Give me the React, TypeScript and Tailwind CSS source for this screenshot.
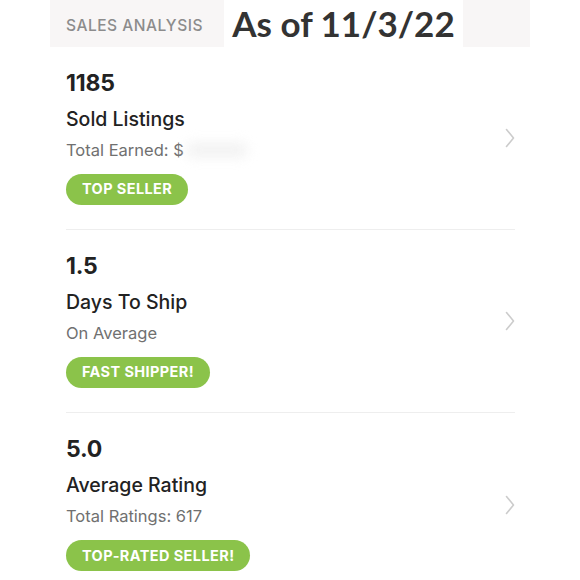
type Stat = {
  value: string;
  title: string;
  sub: string;
  badge: string;
  hidden?: boolean;
};

const STATS: Stat[] = [
  { value: "1185", title: "Sold Listings", sub: "Total Earned: $", badge: "TOP SELLER", hidden: true },
  { value: "1.5", title: "Days To Ship", sub: "On Average", badge: "FAST SHIPPER!" },
  { value: "5.0", title: "Average Rating", sub: "Total Ratings: 617", badge: "TOP-RATED SELLER!" },
];

function Chevron() {
  return (
    <svg width="10" height="20" viewBox="0 0 10 20" fill="none" className="shrink-0">
      <path d="M1.5 1.5 L8.5 10 L1.5 18.5" stroke="#cccccc" strokeWidth="1.6" strokeLinecap="round" strokeLinejoin="round" />
    </svg>
  );
}

function StatRow({ stat, last }: { stat: Stat; last: boolean }) {
  return (
    <div
      className={`flex items-center h-[183px] ${last ? "" : "border-b border-[#eeeeee]"}`}
    >
      <div className="flex-1 min-w-0 pt-[22px]">
        <p className="text-[23px] leading-[28px] font-bold tracking-[-0.2px] text-[#222]">{stat.value}</p>
        <p className="mt-[9px] text-[19.5px] leading-[26px] font-medium text-[#222]">{stat.title}</p>
        <p className="mt-[7px] text-[16.5px] leading-[22px] text-[#707070] flex items-center">
          {stat.sub}
          {stat.hidden && (
            <span className="ml-[2px] inline-block w-[62px] h-[16px] rounded-full bg-[#f0f0f0] blur-[6px] opacity-80" />
          )}
        </p>
        <div className="mt-[13px] mb-[25px]">
          <span className="inline-flex items-center h-[31px] px-[16px] rounded-full bg-[#8bc34a] text-white text-[14.5px] font-bold tracking-[0.4px]">
            {stat.badge}
          </span>
        </div>
      </div>
      <Chevron />
    </div>
  );
}

export default function App() {
  return (
    <div className="w-[580px] h-[580px] bg-white overflow-hidden font-['Inter',sans-serif]">
      <div className="relative mx-[50px] h-[47px] bg-[#f8f6f6] flex items-center pt-[5px]">
        <span className="pl-4 text-[15.5px] font-medium text-[#8c8c8c] tracking-[0.5px]">SALES ANALYSIS</span>
        <div className="absolute left-[174px] top-0 w-[239px] h-[47px] bg-white flex items-center justify-center font-['Lato',sans-serif] text-[35px] font-bold text-[#333]">
          As of 11/3/22
        </div>
      </div>
      <div className="ml-[66px] mr-[65px]">
        {STATS.map((s, i) => (
          <StatRow key={s.value} stat={s} last={i === STATS.length - 1} />
        ))}
      </div>
    </div>
  );
}
